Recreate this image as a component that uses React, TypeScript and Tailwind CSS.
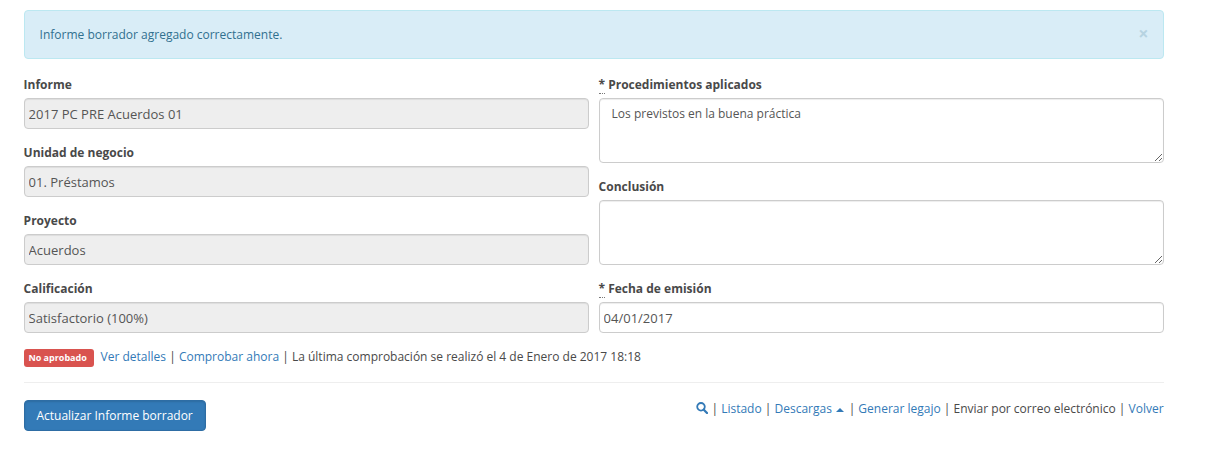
import type { ReactNode } from 'react';

const control =
  'block w-full rounded-[4px] border border-[#ccc] text-[#555] shadow-[inset_0_1px_1px_rgba(0,0,0,0.075)] outline-none';

function Field({ label, required, children }: { label: string; required?: boolean; children: ReactNode }) {
  return (
    <div className="mb-[15px]">
      <label className="mb-[5px] flex h-[17px] items-start gap-[3px] font-bold">
        {required && <abbr title="Requerido" className="h-[18px] border-b border-dotted border-[#777] no-underline">*</abbr>}
        <span>{label}</span>
      </label>
      {children}
    </div>
  );
}

function Input({ value, readOnly }: { value: string; readOnly?: boolean }) {
  return (
    <input
      className={`${control} h-[31px] px-1 pt-px text-[13px] ${readOnly ? 'bg-[#eee]' : 'bg-white'}`}
      defaultValue={value}
      readOnly={readOnly}
    />
  );
}

function Area({ value = '' }: { value?: string }) {
  return <textarea className={`${control} h-[65px] resize-y bg-white px-3 py-1.5 leading-[17px]`} defaultValue={value} />;
}

function Link({ children }: { children: ReactNode }) {
  return <a href="#" className="text-[#337ab7]">{children}</a>;
}

export default function App() {
  return (
    <main className="h-[457px] overflow-hidden bg-white pt-[10px] pr-[44.4px] pl-[23.6px] font-['Open_Sans',sans-serif] text-[12px] leading-[17px] text-[#494949]">
      <div className="mb-[17px] flex h-[49px] items-start justify-between rounded-[4px] border border-[#bce8f1] bg-[#d9edf7] px-[15px] py-[15px] text-[#31708f]">
        <span>Informe borrador agregado correctamente.</span>
        <button className="-mt-px -mr-px text-[18px] leading-[16px] font-bold text-[#31708f] opacity-20" aria-label="Cerrar">×</button>
      </div>

      <div className="grid grid-cols-2 gap-[10px]">
        <div>
          <Field label="Informe"><Input value="2017 PC PRE Acuerdos 01" readOnly /></Field>
          <Field label="Unidad de negocio"><Input value="01. Préstamos" readOnly /></Field>
          <Field label="Proyecto"><Input value="Acuerdos" readOnly /></Field>
          <Field label="Calificación"><Input value="Satisfactorio (100%)" readOnly /></Field>
        </div>
        <div>
          <Field label="Procedimientos aplicados" required><Area value="Los previstos en la buena práctica" /></Field>
          <Field label="Conclusión"><Area /></Field>
          <Field label="Fecha de emisión" required><Input value="04/01/2017" /></Field>
        </div>
      </div>

      <div className="flex h-[35px] items-start border-b border-[#eee]">
        <span className="mt-px mr-[7px] flex h-[18px] w-[70px] items-center justify-center rounded-[3px] bg-[#d9534f] pr-[2px] pb-px text-[9px] leading-none font-bold text-white">
          No aprobado
        </span>
        <p>
          <Link>Ver detalles</Link> | <Link>Comprobar ahora</Link> | La última comprobación se realizó el 4 de Enero de 2017 18:18
        </p>
      </div>

      <div className="mt-[17px] flex items-start justify-between">
        <button className="h-[31px] w-[182px] rounded-[4px] border border-[#2e6da4] bg-[#337ab7] text-white shadow-[inset_0_1px_2px_rgba(0,0,0,0.125)]">
          Actualizar Informe borrador
        </button>
        <p>
          <a href="#" aria-label="Buscar">
            <svg viewBox="0 0 12 12" className="inline-block h-3 w-3 align-[-1px]" fill="none" stroke="#337ab7">
              <circle cx="5" cy="4.8" r="3.8" strokeWidth="1.8" />
              <path d="M7.8 7.8 L11 11" strokeWidth="2.3" strokeLinecap="round" />
            </svg>
          </a>
          {' | '}<Link>Listado</Link>{' | '}
          <Link>
            Descargas{' '}
            <svg viewBox="0 0 8 4" className="mr-[1.5px] ml-px inline-block h-1 w-2 align-[1px]"><path d="M0 4 L4 0 L8 4Z" fill="#337ab7" /></svg>
          </Link>
          {' | '}<Link>Generar legajo</Link>{' | '}Enviar por correo electrónico{' | '}<Link>Volver</Link>
        </p>
      </div>
    </main>
  );
}
